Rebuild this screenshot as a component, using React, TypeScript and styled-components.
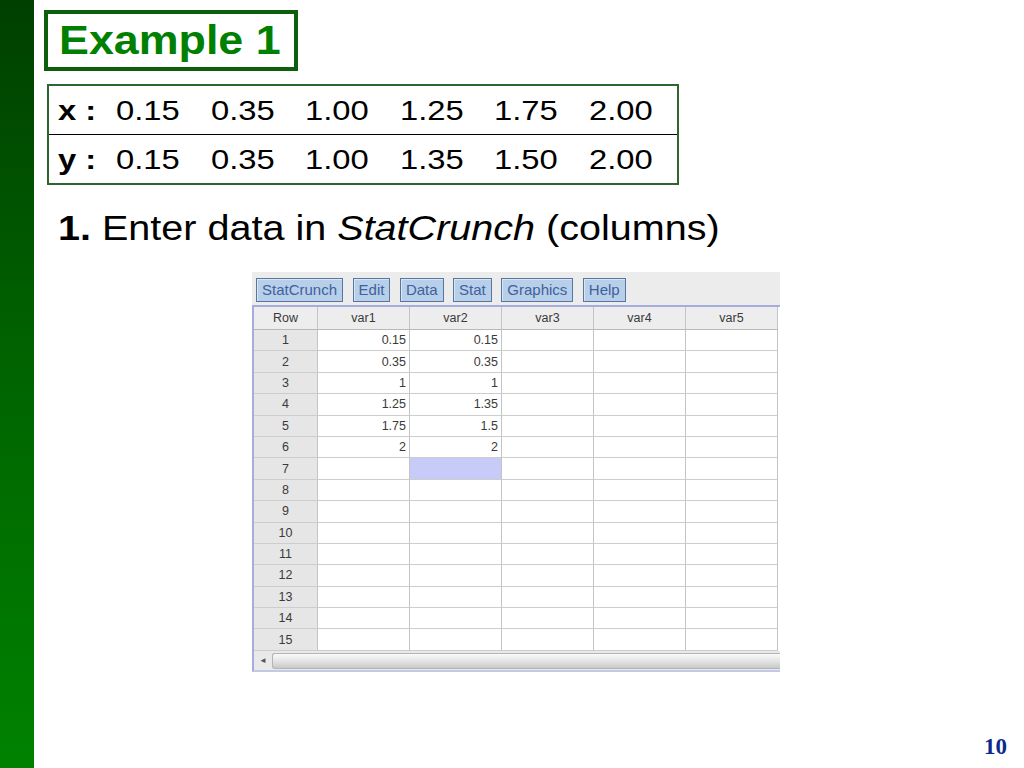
import React from 'react';
import styled, { createGlobalStyle } from 'styled-components';

const GlobalStyle = createGlobalStyle`
  html, body {
    margin: 0;
    padding: 0;
    background: #ffffff;
  }
  body {
    font-family: 'Liberation Sans', Arial, sans-serif;
  }
`;

// slide frame
const Slide = styled.div`
  display: flex;
  width: 1024px;
  height: 768px;
  background: #ffffff;
  overflow: hidden;
`;

const SideBar = styled.div`
  width: 34px;
  flex-shrink: 0;
  background: linear-gradient(to bottom, #003f00 0%, #006200 45%, #008200 100%);
`;

const Main = styled.div`
  flex: 1;
  display: flex;
  flex-direction: column;
  align-items: flex-start;
  padding: 10px 0 0 10px;
`;

const TitleBox = styled.div`
  box-sizing: border-box;
  width: 254px;
  height: 61px;
  border: 4px solid #0d5e0d;
  padding-left: 11px;
  line-height: 53px;
  white-space: nowrap;
`;

// the slide text is wider than plain Arial, so stretch it a little
const Wide = styled.span<{ $scale?: number }>`
  display: inline-block;
  transform: scaleX(${(p) => p.$scale ?? 1.17});
  transform-origin: left center;
  white-space: nowrap;
`;

const TitleText = styled(Wide)`
  font-size: 40px;
  font-weight: bold;
  color: #008000;
`;

const DataTable = styled.div`
  box-sizing: border-box;
  width: 632px;
  margin: 13px 0 0 3px;
  border: 2px solid #2f662f;
`;

const DataRow = styled.div<{ $last?: boolean }>`
  display: grid;
  grid-template-columns: 58px repeat(6, 94.5px);
  padding: 2px 0 0 9px;
  height: 46px;
  line-height: 46px;
  font-size: 28px;
  color: #000000;
  border-bottom: ${(p) => (p.$last ? 'none' : '1px solid #000000')};
`;

const DataLabel = styled(Wide)`
  font-weight: bold;
`;

const Instruction = styled.div`
  margin: 22px 0 0 14px;
  height: 42px;
  line-height: 42px;
  font-size: 35px;
  color: #000000;
`;

// StatCrunch window capture
const Capture = styled.div`
  width: 528px;
  margin: 23px 0 0 208px;
  overflow: hidden;
  font-family: 'Liberation Sans', Arial, sans-serif;
`;

const Toolbar = styled.div`
  display: flex;
  gap: 9.5px;
  box-sizing: border-box;
  height: 35px;
  padding: 6px 0 0 4px;
  background: #ececec;
  border-bottom: 2px solid #a6acdc;
`;

const MenuButton = styled.div`
  height: 24px;
  box-sizing: border-box;
  padding: 0 5px;
  line-height: 22px;
  font-size: 15px;
  color: #3e619c;
  background: #b8cfea;
  border: 1px solid #56759f;
  box-shadow: inset 1px 1px 0 #d8e6f5;
`;

const Sheet = styled.div`
  display: grid;
  grid-template-columns: 64px repeat(5, 92px);
  grid-template-rows: 23px repeat(15, 21.4px);
  border-left: 2px solid #a6acdc;
  font-size: 12.5px;
  color: #3a3a3a;
`;

type CellKind = 'head' | 'row' | 'data';

const Cell = styled.div<{ $kind: CellKind; $selected?: boolean }>`
  box-sizing: border-box;
  border-right: 1px solid #c4c4c4;
  border-bottom: 1px solid #cdcdcd;
  padding: 0 3px;
  display: flex;
  align-items: center;
  justify-content: ${(p) => (p.$kind === 'data' ? 'flex-end' : 'center')};
  background: ${(p) =>
    p.$selected ? '#c7cbf7' : p.$kind === 'head' ? '#ededed' : p.$kind === 'row' ? '#e6e6e6' : '#ffffff'};
  ${(p) => (p.$kind === 'head' ? 'border-bottom-color: #b8b8b8;' : '')}
`;

const ScrollBar = styled.div`
  display: flex;
  height: 21px;
  box-sizing: border-box;
  border-left: 2px solid #a6acdc;
  border-bottom: 2px solid #c4c8e8;
  background: #e9e9e9;
  padding: 2px 0 1px 0;
`;

const ScrollArrow = styled.div`
  width: 18px;
  display: flex;
  align-items: center;
  justify-content: center;
  font-size: 8px;
  color: #555555;
`;

const ScrollThumb = styled.div`
  flex: 1;
  border: 1px solid #b4b4b4;
  border-right: none;
  border-radius: 3px 0 0 3px;
  background: linear-gradient(to bottom, #fafafa 0%, #e4e4e4 50%, #c9c9c9 100%);
`;

const PageNumber = styled.div`
  margin: auto 17px 10px 0;
  align-self: flex-end;
  font-family: 'Liberation Serif', 'Times New Roman', serif;
  font-weight: bold;
  font-size: 23px;
  line-height: 23px;
  color: #0b2a8f;
`;

const xs = ['0.15', '0.35', '1.00', '1.25', '1.75', '2.00'];
const ys = ['0.15', '0.35', '1.00', '1.35', '1.50', '2.00'];

const var1 = ['0.15', '0.35', '1', '1.25', '1.75', '2'];
const var2 = ['0.15', '0.35', '1', '1.35', '1.5', '2'];

const menus = ['StatCrunch', 'Edit', 'Data', 'Stat', 'Graphics', 'Help'];
const heads = ['Row', 'var1', 'var2', 'var3', 'var4', 'var5'];

const App: React.FC = () => {
  const rows = Array.from({ length: 15 }, (_, i) => i + 1);

  return (
    <>
      <GlobalStyle />
      <Slide>
        <SideBar />
        <Main>
          <TitleBox>
            <TitleText $scale={1.12}>Example 1</TitleText>
          </TitleBox>

          <DataTable>
            <DataRow>
              <span><DataLabel>x :</DataLabel></span>
              {xs.map((v, i) => (
                <span key={i}><Wide>{v}</Wide></span>
              ))}
            </DataRow>
            <DataRow $last>
              <span><DataLabel>y :</DataLabel></span>
              {ys.map((v, i) => (
                <span key={i}><Wide>{v}</Wide></span>
              ))}
            </DataRow>
          </DataTable>

          <Instruction>
            <Wide $scale={1.13}>
              <b>1.</b> Enter data in <i>StatCrunch</i> (columns)
            </Wide>
          </Instruction>

          <Capture>
            <Toolbar>
              {menus.map((m) => (
                <MenuButton key={m}>{m}</MenuButton>
              ))}
            </Toolbar>
            <Sheet>
              {heads.map((h) => (
                <Cell key={h} $kind="head">{h}</Cell>
              ))}
              {rows.map((r) => (
                <React.Fragment key={r}>
                  <Cell $kind="row">{r}</Cell>
                  <Cell $kind="data">{var1[r - 1] ?? ''}</Cell>
                  <Cell $kind="data" $selected={r === 7}>{var2[r - 1] ?? ''}</Cell>
                  <Cell $kind="data" />
                  <Cell $kind="data" />
                  <Cell $kind="data" />
                </React.Fragment>
              ))}
            </Sheet>
            <ScrollBar>
              <ScrollArrow>◄</ScrollArrow>
              <ScrollThumb />
            </ScrollBar>
          </Capture>

          <PageNumber>10</PageNumber>
        </Main>
      </Slide>
    </>
  );
};

export default App;
